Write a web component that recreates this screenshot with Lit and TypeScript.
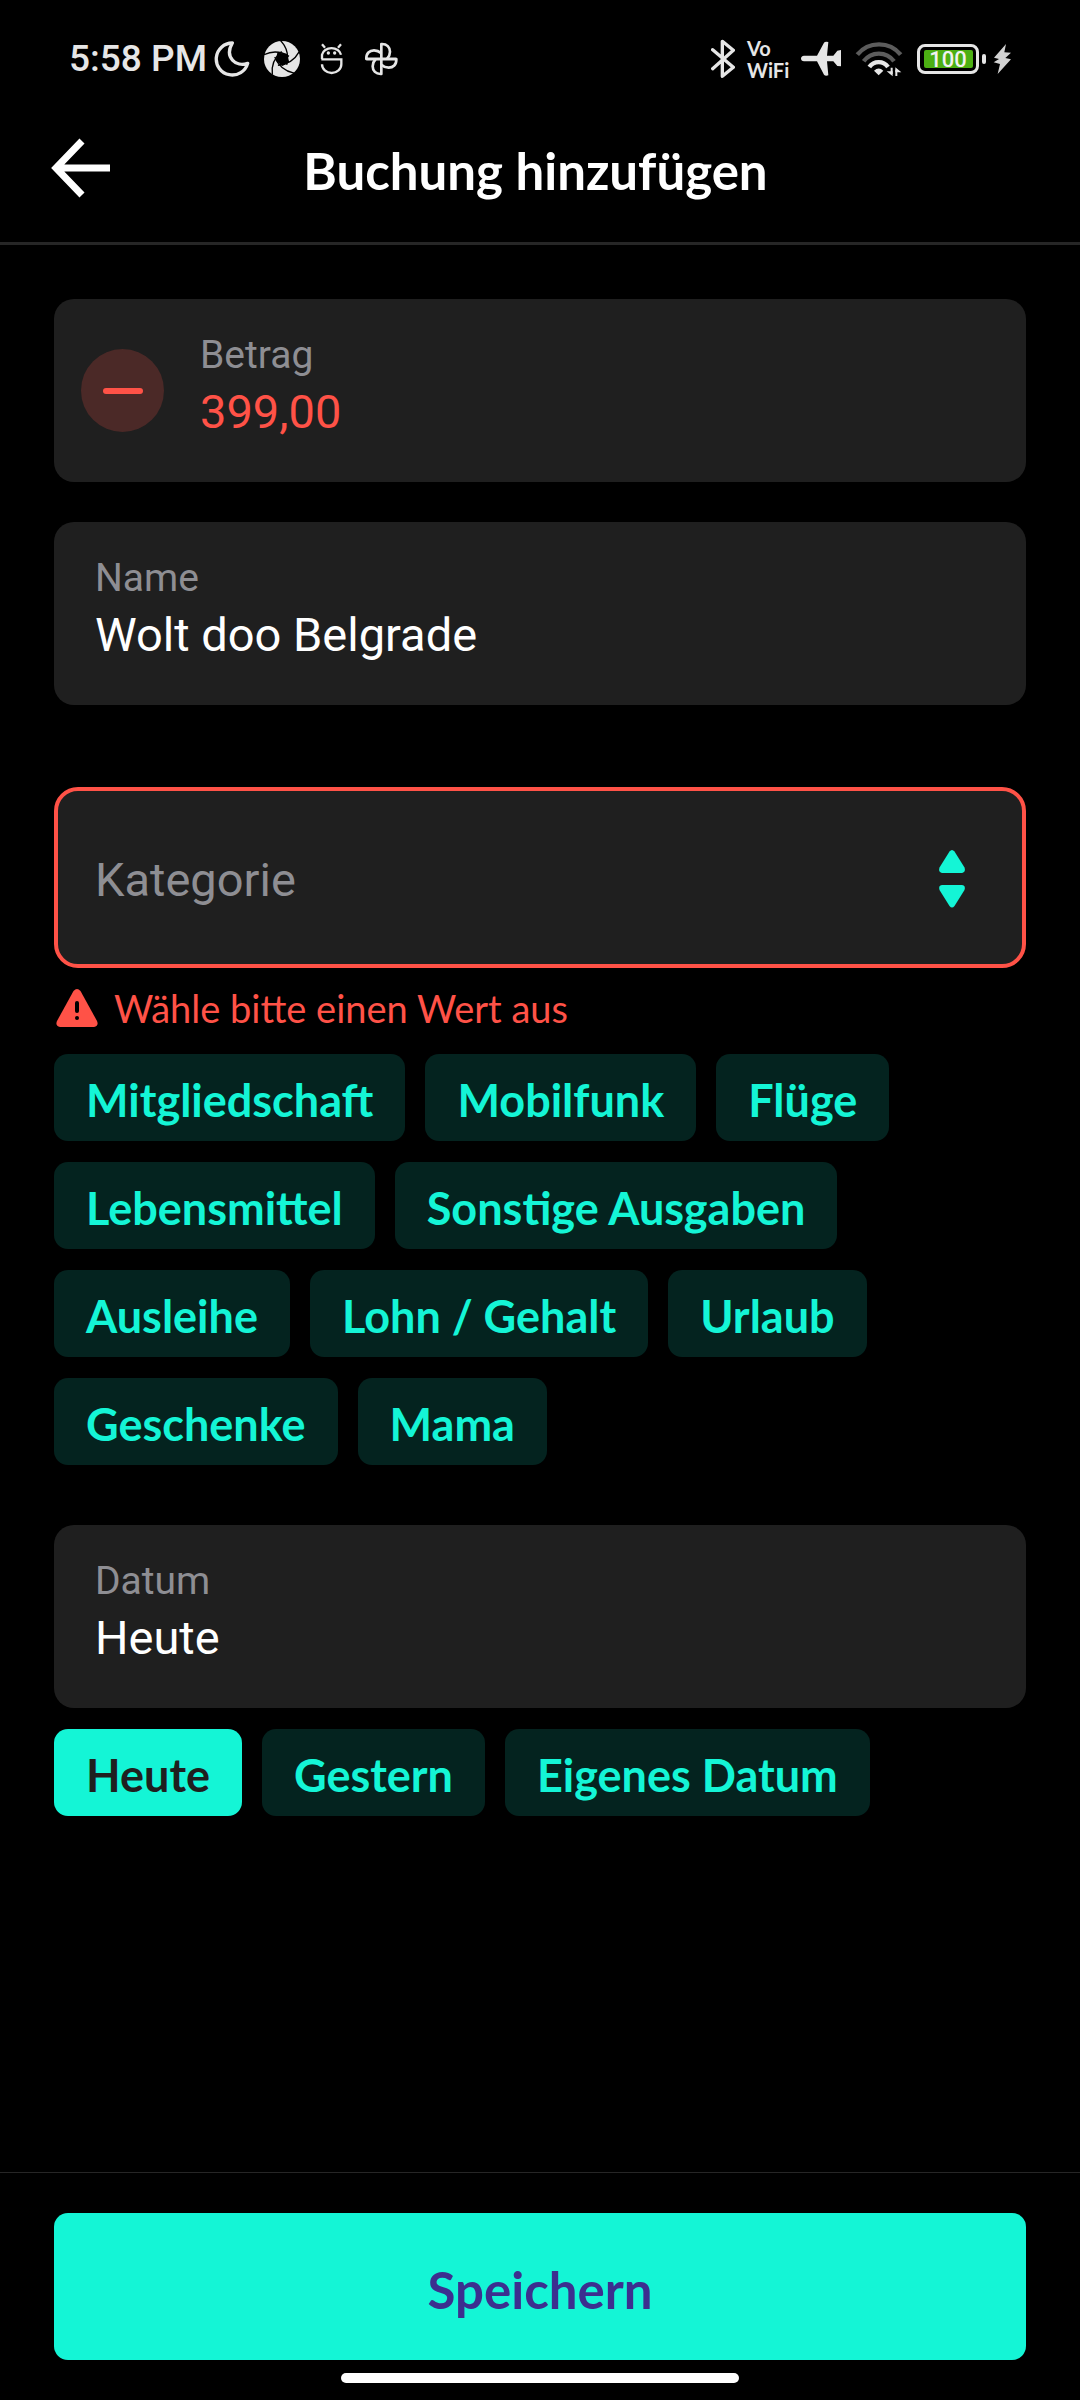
import { LitElement, html, css, svg } from "lit";
import { customElement, state } from "lit/decorators.js";
import { classMap } from "lit/directives/class-map.js";

const CATEGORIES = [
  "Mitgliedschaft",
  "Mobilfunk",
  "Flüge",
  "Lebensmittel",
  "Sonstige Ausgaben",
  "Ausleihe",
  "Lohn / Gehalt",
  "Urlaub",
  "Geschenke",
  "Mama",
];

const DATES = ["Heute", "Gestern", "Eigenes Datum"];

@customElement("status-bar")
class StatusBar extends LitElement {
  static styles = css`
    :host {
      display: flex;
      justify-content: space-between;
      align-items: center;
      height: 100px;
      padding: 18px 69px 0 69px;
      box-sizing: border-box;
      color: #e6e6e6;
      font-family: Roboto, "Liberation Sans", sans-serif;
    }
    .group {
      display: flex;
      align-items: center;
      gap: 12px;
    }
    .group.left {
      gap: 14px;
    }
    .time {
      font-size: 37px;
      line-height: 40px;
      font-weight: 500;
      margin-right: -7px;
    }
    svg {
      display: block;
      flex: none;
    }
    .vowifi {
      width: 42px;
      font-family: Lato, sans-serif;
      font-weight: 700;
      font-size: 20px;
      line-height: 22px;
    }
    .power {
      display: flex;
      align-items: center;
      gap: 7px;
    }
    .battery {
      display: flex;
      align-items: center;
      gap: 3px;
    }
    .cell {
      display: flex;
      align-items: center;
      justify-content: center;
      width: 62px;
      height: 30px;
      box-sizing: border-box;
      border: 3px solid #e6e6e6;
      border-radius: 8px;
    }
    .charge {
      width: 49px;
      height: 18px;
      border-radius: 2px;
      background: #4caf13;
      font-size: 22px;
      line-height: 19px;
      font-weight: 500;
      text-align: center;
      color: #f2f2f2;
    }
    .nub {
      width: 4px;
      height: 10px;
      border-radius: 2px;
      background: #e6e6e6;
    }
  `;

  render() {
    return html`
      <div class="group left">
        <span class="time">5:58 PM</span>
        <svg width="36" height="36" viewBox="522 63 108 108" fill="none" stroke="currentColor" stroke-width="10" stroke-linejoin="round" aria-hidden="true">
          <path d="M577 69A48 48 0 1 0 623 130C588 142 552 112 577 69Z" />
        </svg>
        <svg width="36" height="36" viewBox="672 63 108 108" aria-hidden="true">
          <circle cx="726" cy="117" r="54" fill="currentColor" />
          <path d="M712 98L740 101L748 127L727 138L707 122Z" fill="#000" />
          ${[0, 72, 144, 216, 288].map(
            (a) => svg`<path transform="rotate(${a} 726 117)" d="M747 109Q710 86 672 104" fill="none" stroke="#000" stroke-width="4" />`
          )}
        </svg>
        <svg width="36" height="36" viewBox="824 63 108 108" fill="none" stroke="currentColor" stroke-width="7" aria-hidden="true">
          <path d="M848 73L857 83M905 73L896 83M848 117V104A29 24 0 0 1 905 104M846 118H906V133A29 26 0 0 1 848 133" />
          <circle cx="867" cy="99" r="5" fill="currentColor" stroke="none" />
          <circle cx="886" cy="99" r="5" fill="currentColor" stroke="none" />
        </svg>
        <svg width="36" height="36" viewBox="974 63 108 108" fill="none" stroke="currentColor" stroke-width="8" stroke-linejoin="round" aria-hidden="true">
          ${[0, 90, 180, 270].map(
            (a) => svg`<path transform="rotate(${a} 1026 117)" d="M1026 117V72C1043 71 1052 82 1052 95Q1052 107 1043 117" />`
          )}
          <path d="M981 117H1071" />
        </svg>
      </div>
      <div class="group">
        <svg width="24" height="40" viewBox="63 57 72 120" fill="none" stroke="currentColor" stroke-width="10" stroke-linejoin="round" stroke-linecap="round" aria-hidden="true">
          <path d="M68 89L130 142L97 169V64L130 91L68 146" />
        </svg>
        <div class="vowifi">Vo<br />WiFi</div>
        <svg width="40" height="36" viewBox="330 63 120 108" fill="currentColor" aria-hidden="true">
          <path d="M339 107H378L399 68Q402 64 412 66L408 107H427L439 92L450 90V139L439 138L427 124H408L412 166Q403 169 399 164L378 124H339Q330 123 330 115.500Q330 108 339 107Z" />
        </svg>
        <svg width="52" height="36" viewBox="489 65 156 108" fill="none" stroke="#e6e6e6" stroke-width="13" aria-hidden="true">
          <path d="M502 106A84 84 0 0 1 632 106M521 126A56 56 0 0 1 612 126" stroke="#5c5c5c" />
          <path d="M538 143A34 34 0 0 1 594 143" />
          <path d="M552 154Q566 141 580 154L566 168Z" fill="#e6e6e6" stroke="none" />
          <path d="M605 145V164M619 170V151" stroke-width="6" />
          <path d="M590 156H608V171ZM634 159H616V144Z" fill="#e6e6e6" stroke="none" />
        </svg>
        <div class="power">
          <div class="battery">
            <div class="cell"><div class="charge">100</div></div>
            <div class="nub"></div>
          </div>
          <svg width="18" height="30" viewBox="909 72 54 90" fill="#d2d2d2" aria-hidden="true">
            <path d="M948 72L912 113L927 117L911 127L930 132L923 162L963 118L946 114L963 98L943 97Z" />
          </svg>
        </div>
      </div>
    `;
  }
}

@customElement("app-root")
class AppRoot extends LitElement {
  @state() private date = "Heute";
  @state() private category = "";

  static styles = css`
    :host {
      display: flex;
      flex-direction: column;
      min-height: 100vh;
      background: #000;
      color: #fff;
      font-family: Roboto, "Liberation Sans", sans-serif;
    }
    button,
    input,
    select {
      font: inherit;
      color: inherit;
      margin: 0;
      padding: 0;
      border: 0;
      background: none;
      outline: none;
    }
    button {
      cursor: pointer;
    }
    svg {
      display: block;
      flex: none;
    }
    .header {
      display: grid;
      grid-template-columns: 1fr auto 1fr;
      align-items: center;
      height: 145px;
      box-sizing: border-box;
      padding: 0 60px 6px 51px;
      border-bottom: 3px solid #262626;
    }
    .back {
      justify-self: start;
    }
    .title {
      margin: 0;
      padding-top: 6px;
      font-family: Lato, sans-serif;
      font-size: 51px;
      line-height: 60px;
      font-weight: 700;
    }
    .form {
      display: flex;
      flex-direction: column;
      padding: 54px 54px 40px;
    }
    .card {
      display: flex;
      align-items: center;
      gap: 36px;
      box-sizing: border-box;
      padding: 34px 41px 40px;
      border-radius: 20px;
      background: #1f1f1f;
    }
    .card.amount {
      padding-left: 27px;
      margin-bottom: 40px;
      color: #ff5247;
    }
    .field {
      display: flex;
      flex-direction: column;
      flex: 1;
      min-width: 0;
      gap: 5px;
    }
    .label {
      font-size: 39px;
      line-height: 44px;
      color: #8e8e93;
    }
    .value {
      width: 100%;
      height: 60px;
      font-size: 47px;
      line-height: 60px;
    }
    .sign {
      display: flex;
      align-items: center;
      justify-content: center;
      width: 83px;
      height: 83px;
      margin-top: 6px;
      border-radius: 50%;
      background: #4b2927;
    }
    .minus {
      width: 40px;
      height: 6px;
      border-radius: 3px;
      background: #ff5247;
    }
    .picker {
      display: grid;
      align-items: center;
      margin-top: 82px;
    }
    .picker > * {
      grid-area: 1 / 1;
    }
    .select {
      appearance: none;
      width: 100%;
      height: 181px;
      box-sizing: border-box;
      padding: 4px 37px 0;
      border: 4px solid #ff5247;
      border-radius: 24px;
      background: #1f1f1f;
      font-size: 47px;
      color: #8e8e93;
    }
    .arrows {
      justify-self: end;
      margin: 2px 60px 0 0;
      pointer-events: none;
    }
    .error {
      display: flex;
      align-items: center;
      gap: 16px;
      margin: 20px 0 26px 2px;
      font-family: Lato, sans-serif;
      font-size: 38px;
      line-height: 40px;
      color: #ff5247;
    }
    .chips {
      display: flex;
      flex-wrap: wrap;
      gap: 21px 20px;
    }
    .chips.categories {
      margin-bottom: 60px;
    }
    .chips.dates {
      margin-top: 21px;
    }
    .chip {
      height: 87px;
      padding: 5px 32px 0;
      border-radius: 14px;
      background: #04231f;
      color: #14f5d6;
      font-family: Lato, sans-serif;
      font-size: 45px;
      font-weight: 700;
    }
    .chip.active {
      background: #14f5d6;
      color: #1f1f1f;
    }
    .footer {
      display: flex;
      flex-direction: column;
      align-items: center;
      gap: 13px;
      margin-top: auto;
      padding: 40px 54px 17px;
      border-top: 1px solid #262626;
    }
    .save {
      width: 100%;
      height: 147px;
      padding-top: 5px;
      border-radius: 14px;
      background: #14f5d6;
      color: #3c2f8f;
      font-family: Lato, sans-serif;
      font-size: 51px;
      font-weight: 700;
    }
    .home {
      width: 41%;
      height: 10px;
      border-radius: 5px;
      background: #fff;
    }
  `;

  render() {
    return html`
      <status-bar></status-bar>
      <header class="header">
        <button class="back" aria-label="Zurück">
          <svg width="60" height="60" viewBox="0 0 60 60" fill="none" stroke="#fff" stroke-width="7" aria-hidden="true">
            <path d="M31 3L5 30L31 57M5 30H59" />
          </svg>
        </button>
        <h1 class="title">Buchung hinzufügen</h1>
      </header>
      <main class="form">
        <div class="card amount">
          <button class="sign" aria-label="Vorzeichen"><span class="minus"></span></button>
          <div class="field">
            <label class="label" for="amount">Betrag</label>
            <input class="value" id="amount" type="text" inputmode="decimal" value="399,00" />
          </div>
        </div>
        <div class="card">
          <div class="field">
            <label class="label" for="name">Name</label>
            <input class="value" id="name" type="text" value="Wolt doo Belgrade" />
          </div>
        </div>
        <div class="picker">
          <select
            class="select"
            aria-label="Kategorie"
            aria-invalid="true"
            aria-describedby="category-error"
            @change=${(e: Event) => (this.category = (e.target as HTMLSelectElement).value)}
          >
            <option value="" ?selected=${!this.category}>Kategorie</option>
            ${CATEGORIES.map((c) => html`<option value=${c} ?selected=${this.category === c}>${c}</option>`)}
          </select>
          <svg class="arrows" width="28" height="60" viewBox="0 0 28 60" fill="#14f5d6" aria-hidden="true">
            <path d="M11.500 2.500Q14 -0.500 16.500 2.500L26.500 18.500Q28 23 24 24H4Q0 23 1.500 18.500Z" />
            <path d="M11.500 57Q14 60 16.500 57L26.500 41Q28 36.500 24 36H4Q0 36.500 1.500 41Z" />
          </svg>
        </div>
        <div class="error" id="category-error" role="alert">
          <svg width="42" height="40" viewBox="0 0 42 40" aria-hidden="true">
            <path d="M17.500 3Q21 -1 24.500 3L41 33Q43 38 38 39H4Q-1 38 1 33Z" fill="#ff5247" />
            <path d="M21 15V23" stroke="#000" stroke-width="4" stroke-linecap="round" />
            <circle cx="21" cy="30" r="2" fill="#000" />
          </svg>
          <span>Wähle bitte einen Wert aus</span>
        </div>
        <div class="chips categories">
          ${CATEGORIES.map(
            (c) => html`<button
              class=${classMap({ chip: true, active: this.category === c })}
              @click=${() => (this.category = c)}
            >${c}</button>`
          )}
        </div>
        <div class="card">
          <div class="field">
            <label class="label" for="date">Datum</label>
            <input class="value" id="date" type="text" readonly .value=${this.date} />
          </div>
        </div>
        <div class="chips dates">
          ${DATES.map(
            (d) => html`<button
              class=${classMap({ chip: true, active: this.date === d })}
              aria-pressed=${this.date === d ? "true" : "false"}
              @click=${() => (this.date = d)}
            >${d}</button>`
          )}
        </div>
      </main>
      <footer class="footer">
        <button class="save">Speichern</button>
        <div class="home"></div>
      </footer>
    `;
  }
}
